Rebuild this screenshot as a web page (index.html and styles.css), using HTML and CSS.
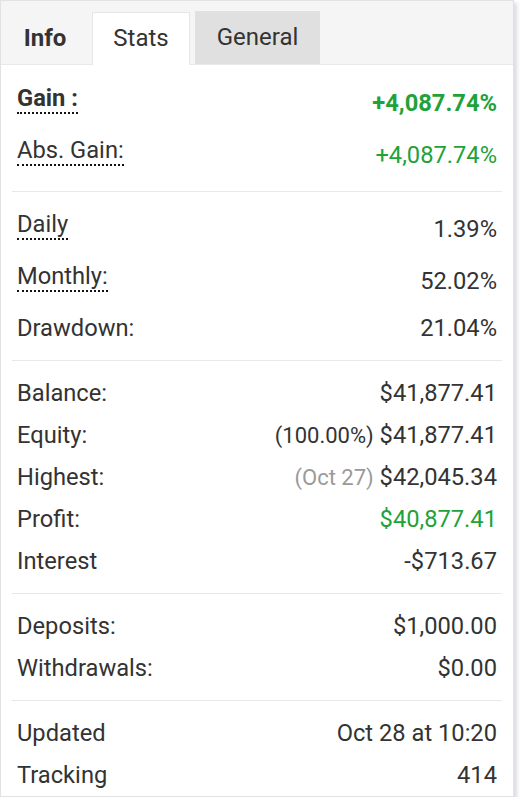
FILE: index.html
```html
<!DOCTYPE html>
<html>
<head>
<meta charset="utf-8">
<link rel="stylesheet" href="styles.css">
</head>
<body>
<div class="panel">
  <div class="tabs">
    <div class="tab tab-info">Info</div>
    <div class="tab tab-active">Stats</div>
    <div class="tab tab-general">General</div>
  </div>
  <div class="section first">
    <div class="row tall"><span class="label dot bold">Gain :</span><span class="value green bold">+4,087.74%</span></div>
    <div class="row tall"><span class="label dot">Abs. Gain:</span><span class="value green">+4,087.74%</span></div>
  </div>
  <div class="section">
    <div class="row tall"><span class="label dot">Daily</span><span class="value">1.39%</span></div>
    <div class="row tall"><span class="label dot">Monthly:</span><span class="value">52.02%</span></div>
    <div class="row"><span class="label">Drawdown:</span><span class="value">21.04%</span></div>
  </div>
  <div class="section">
    <div class="row"><span class="label">Balance:</span><span class="value">$41,877.41</span></div>
    <div class="row"><span class="label">Equity:</span><span class="value"><span class="note">(100.00%)</span> $41,877.41</span></div>
    <div class="row"><span class="label">Highest:</span><span class="value"><span class="note muted">(Oct 27)</span> $42,045.34</span></div>
    <div class="row"><span class="label">Profit:</span><span class="value green">$40,877.41</span></div>
    <div class="row"><span class="label">Interest</span><span class="value">-$713.67</span></div>
  </div>
  <div class="section">
    <div class="row"><span class="label">Deposits:</span><span class="value">$1,000.00</span></div>
    <div class="row"><span class="label">Withdrawals:</span><span class="value">$0.00</span></div>
  </div>
  <div class="section last">
    <div class="row"><span class="label">Updated</span><span class="value">Oct 28 at 10:20</span></div>
    <div class="row"><span class="label">Tracking</span><span class="value">414</span></div>
  </div>
</div>
</body>
</html>
```
FILE: styles.css
```css
html, body {
  margin: 0;
  padding: 0;
  background: #ffffff;
}
body {
  font-family: Roboto, "Liberation Sans", Arial, sans-serif;
  color: #333333;
}
.panel {
  width: 514px;
  box-sizing: border-box;
  border: 1px solid #e2e2e2;
  background: #ffffff;
  box-shadow: 3px 3px 4px rgba(90, 90, 120, 0.22);
}
.tabs {
  display: flex;
  align-items: flex-end;
  height: 63px;
  background: #f5f5f5;
  border-bottom: 1px solid #e9e9e9;
  box-sizing: content-box;
}
.tab {
  font-size: 24px;
  height: 52px;
  line-height: 52px;
  box-sizing: border-box;
  text-align: center;
  color: #333333;
}
.tab-info {
  width: 88px;
  font-weight: 700;
}
.tab-active {
  width: 98px;
  background: #ffffff;
  border: 1px solid #e6e6e6;
  border-bottom: none;
  margin-bottom: -1px;
  margin-left: 3px;
  height: 53px;
  line-height: 51px;
}
.tab-general {
  width: 125px;
  margin-left: 5px;
  background: #e0e0e0;
  height: 53px;
  line-height: 53px;
}
.section {
  margin: 0 11px;
  padding: 11px 0;
  border-top: 1px solid #e8e8e8;
}
.section.first {
  border-top: none;
  padding: 12px 0 10px;
}
.section.last {
  padding-bottom: 0;
}
.row {
  display: flex;
  justify-content: space-between;
  align-items: center;
  min-height: 42px;
  padding: 0 5px 0 5px;
  font-size: 23.7px;
}
.row.tall {
  min-height: 52px;
}
.dot {
  border-bottom: 2px dotted #111111;
  padding-bottom: 4px;
  margin-bottom: 4px;
  line-height: 20px;
}
.bold {
  font-weight: 700;
}
.green {
  color: #1fa23a;
}
.note {
  font-size: 22px;
  color: #333333;
}
.note.muted {
  color: #9a9a9a;
}
```
